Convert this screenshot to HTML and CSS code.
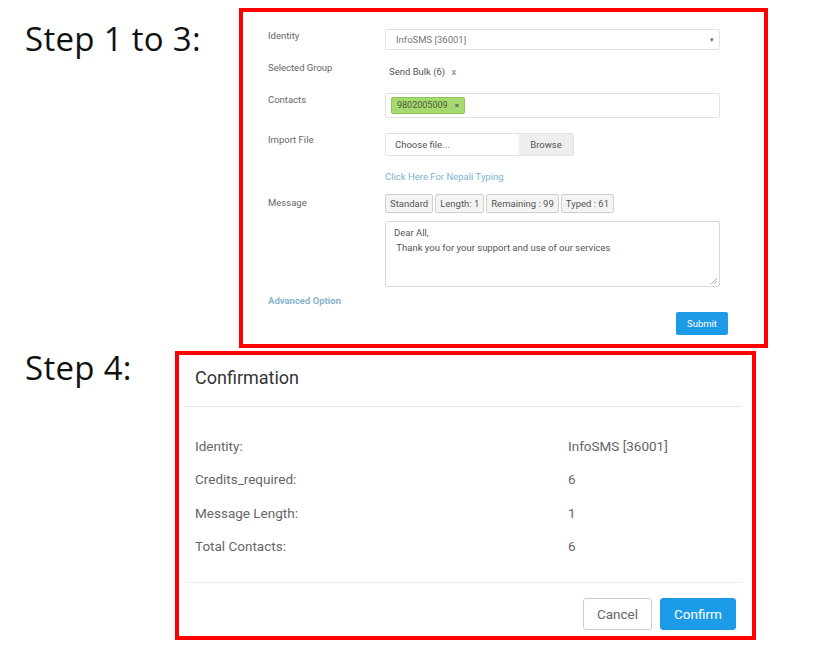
FILE: index.html
```html
<!DOCTYPE html>
<html>
<head>
	<meta charset="utf-8">
	<title>Send Bulk SMS - Steps</title>
	<link rel="stylesheet" href="styles.css">
</head>
<body>
<div class="page">
	<section class="step step-form">
		<h2 class="step-title">Step 1 to 3:</h2>
		<div class="frame frame-form">
			<div class="row row-identity">
				<label class="label">Identity</label>
				<div class="select">
					<span>InfoSMS [36001]</span>
					<span class="caret">&#9662;</span>
				</div>
			</div>
			<div class="row row-group">
				<label class="label">Selected Group</label>
				<div class="group-value">Send Bulk (6) <span class="remove">x</span></div>
			</div>
			<div class="row row-contacts">
				<label class="label">Contacts</label>
				<div class="tags">
					<span class="tag">9802005009 <b>&times;</b></span>
				</div>
			</div>
			<div class="row row-import">
				<label class="label">Import File</label>
				<div class="file">
					<span class="file-name">Choose file...</span>
					<span class="file-btn">Browse</span>
				</div>
			</div>
			<div class="row row-link">
				<span class="label"></span>
				<a href="javascript:;" class="nepali">Click Here For Nepali Typing</a>
			</div>
			<div class="row row-message">
				<label class="label">Message</label>
				<div class="badges">
					<span class="badge">Standard</span>
					<span class="badge">Length: 1</span>
					<span class="badge">Remaining : 99</span>
					<span class="badge">Typed : 61</span>
				</div>
			</div>
			<div class="row row-text">
				<span class="label"></span>
				<div class="textarea">
					<div>Dear All,</div>
					<div>&nbsp;Thank you for your support and use of our services</div>
					<svg class="grip" width="6" height="6" viewBox="0 0 6 6"><path d="M6 0L0 6M6 3L3 6" stroke="#999" stroke-width="0.8"/></svg>
				</div>
			</div>
			<div class="row row-advanced">
				<a href="javascript:;" class="advanced">Advanced Option</a>
			</div>
			<div class="row row-submit">
				<a href="javascript:;" class="btn-submit">Submit</a>
			</div>
		</div>
	</section>

	<section class="step step-modal">
		<h2 class="step-title">Step 4:</h2>
		<div class="frame frame-modal">
			<div class="modal-head">Confirmation</div>
			<div class="modal-body">
				<div class="info-row"><span class="info-key">Identity:</span><span class="info-val">InfoSMS [36001]</span></div>
				<div class="info-row"><span class="info-key">Credits_required:</span><span class="info-val">6</span></div>
				<div class="info-row"><span class="info-key">Message Length:</span><span class="info-val">1</span></div>
				<div class="info-row"><span class="info-key">Total Contacts:</span><span class="info-val">6</span></div>
			</div>
			<div class="modal-foot">
				<a href="javascript:;" class="btn btn-cancel">Cancel</a>
				<a href="javascript:;" class="btn btn-confirm">Confirm</a>
			</div>
		</div>
	</section>
</div>
</body>
</html>
```

FILE: styles.css
```css
* {
	margin: 0;
	padding: 0;
	box-sizing: border-box;
	text-decoration: none;
}
body {
	background: #fff;
	font-family: Roboto, "Liberation Sans", sans-serif;
	color: #555;
}
.page {
	width: 831px;
	height: 647px;
	padding-top: 8px;
}
.step {
	display: flex;
	align-items: flex-start;
}
.step-title {
	font-family: "Open Sans", "DejaVu Sans", sans-serif;
	font-weight: normal;
	font-size: 33px;
	color: #111;
	padding-left: 25px;
	line-height: 1;
	letter-spacing: 0.3px;
}
.step-form .step-title {
	width: 239px;
	padding-top: 14px;
}
.step-modal {
	margin-top: 3px;
}
.step-modal .step-title {
	width: 175px;
	padding-top: 0;
}
.frame {
	border: 4px solid #f00;
	background: #fff;
}

/* form */
.frame-form {
	width: 529px;
	height: 340px;
	padding: 17px 44px 0 25px;
	font-size: 9.5px;
}
.row {
	display: flex;
	align-items: flex-start;
}
.label {
	width: 117px;
	flex: none;
	color: #666;
	line-height: 14px;
}
.select {
	flex: 1;
	height: 21px;
	border: 1px solid #e2e2e2;
	border-radius: 2px;
	display: flex;
	justify-content: space-between;
	align-items: center;
	padding: 0 5px 0 10px;
	color: #777;
}
.caret {
	font-size: 7px;
	color: #666;
}
.row-group {
	margin-top: 10px;
	height: 20px;
	align-items: center;
}
.row-group .label {
	margin-top: -4px;
}
.group-value {
	padding-left: 4px;
	color: #555;
	margin-top: 2px;
}
.remove {
	margin-left: 4px;
	color: #777;
}
.row-contacts {
	margin-top: 13px;
}
.tags {
	flex: 1;
	height: 25px;
	border: 1px solid #e2e2e2;
	border-radius: 2px;
	padding: 3px 5px;
}
.tag {
	display: inline-block;
	height: 17px;
	line-height: 15px;
	padding: 0 5px;
	background: #a6d96e;
	border: 1px solid #8cc458;
	border-radius: 2px;
	color: #4b5b3c;
	font-size: 9px;
}
.tag b {
	margin-left: 5px;
	font-size: 8px;
	color: #556;
}
.row-import {
	margin-top: 15px;
}
.file {
	display: flex;
	height: 23px;
	border: 1px solid #e2e2e2;
	border-radius: 2px;
}
.file-name {
	width: 133px;
	padding-left: 9px;
	line-height: 21px;
	color: #555;
}
.file-btn {
	width: 54px;
	background: #eee;
	text-align: center;
	line-height: 21px;
	color: #555;
}
.row-link {
	margin-top: 14px;
}
.nepali {
	color: #7cb3cf;
	line-height: 14px;
}
.row-message {
	margin-top: 10px;
}
.row-message .label {
	padding-top: 2px;
}
.badges {
	display: flex;
	gap: 2px;
}
.badge {
	height: 19px;
	line-height: 17px;
	padding: 0 4px;
	background: #f4f4f4;
	border: 1px solid #cfcfcf;
	border-radius: 2px;
	color: #555;
}
.row-text {
	margin-top: 8px;
}
.textarea {
	flex: 1;
	position: relative;
	height: 66px;
	border: 1px solid #d8d8d8;
	border-radius: 2px;
	padding: 3px 8px;
	line-height: 15px;
	color: #555;
}
.grip {
	position: absolute;
	right: 2px;
	bottom: 2px;
}
.row-advanced {
	margin-top: 8px;
}
.advanced {
	color: #88b3ca;
	font-weight: bold;
	line-height: 12px;
}
.row-submit {
	margin-top: 5px;
	justify-content: flex-end;
	margin-right: -8px;
}
.btn-submit {
	display: block;
	width: 52px;
	height: 23px;
	line-height: 23px;
	text-align: center;
	background: #1e9be8;
	border-radius: 2px;
	color: #fff;
}

/* confirmation modal */
.frame-modal {
	width: 581px;
	height: 289px;
	padding: 0 10px 0 6px;
}
.modal-head {
	height: 52px;
	border-bottom: 1px solid #e8e8e8;
	padding: 11px 0 0 10px;
	font-size: 18px;
	color: #333;
	line-height: 24px;
}
.modal-body {
	height: 176px;
	border-bottom: 1px solid #ececec;
	padding: 30px 0 0 10px;
}
.info-row {
	display: flex;
	height: 33.3px;
	font-size: 13.5px;
	line-height: 18px;
	color: #666;
}
.info-key {
	width: 373px;
}
.modal-foot {
	display: flex;
	justify-content: flex-end;
	gap: 8px;
	padding-top: 15px;
	padding-right: 6px;
}
.btn {
	display: block;
	height: 32px;
	line-height: 30px;
	border-radius: 3px;
	font-size: 13.5px;
	text-align: center;
}
.btn-cancel {
	width: 69px;
	border: 1px solid #ccc;
	color: #666;
	background: #fff;
}
.btn-confirm {
	width: 76px;
	border: 1px solid #1a98e4;
	background: #1c9be8;
	color: #fff;
}
```
